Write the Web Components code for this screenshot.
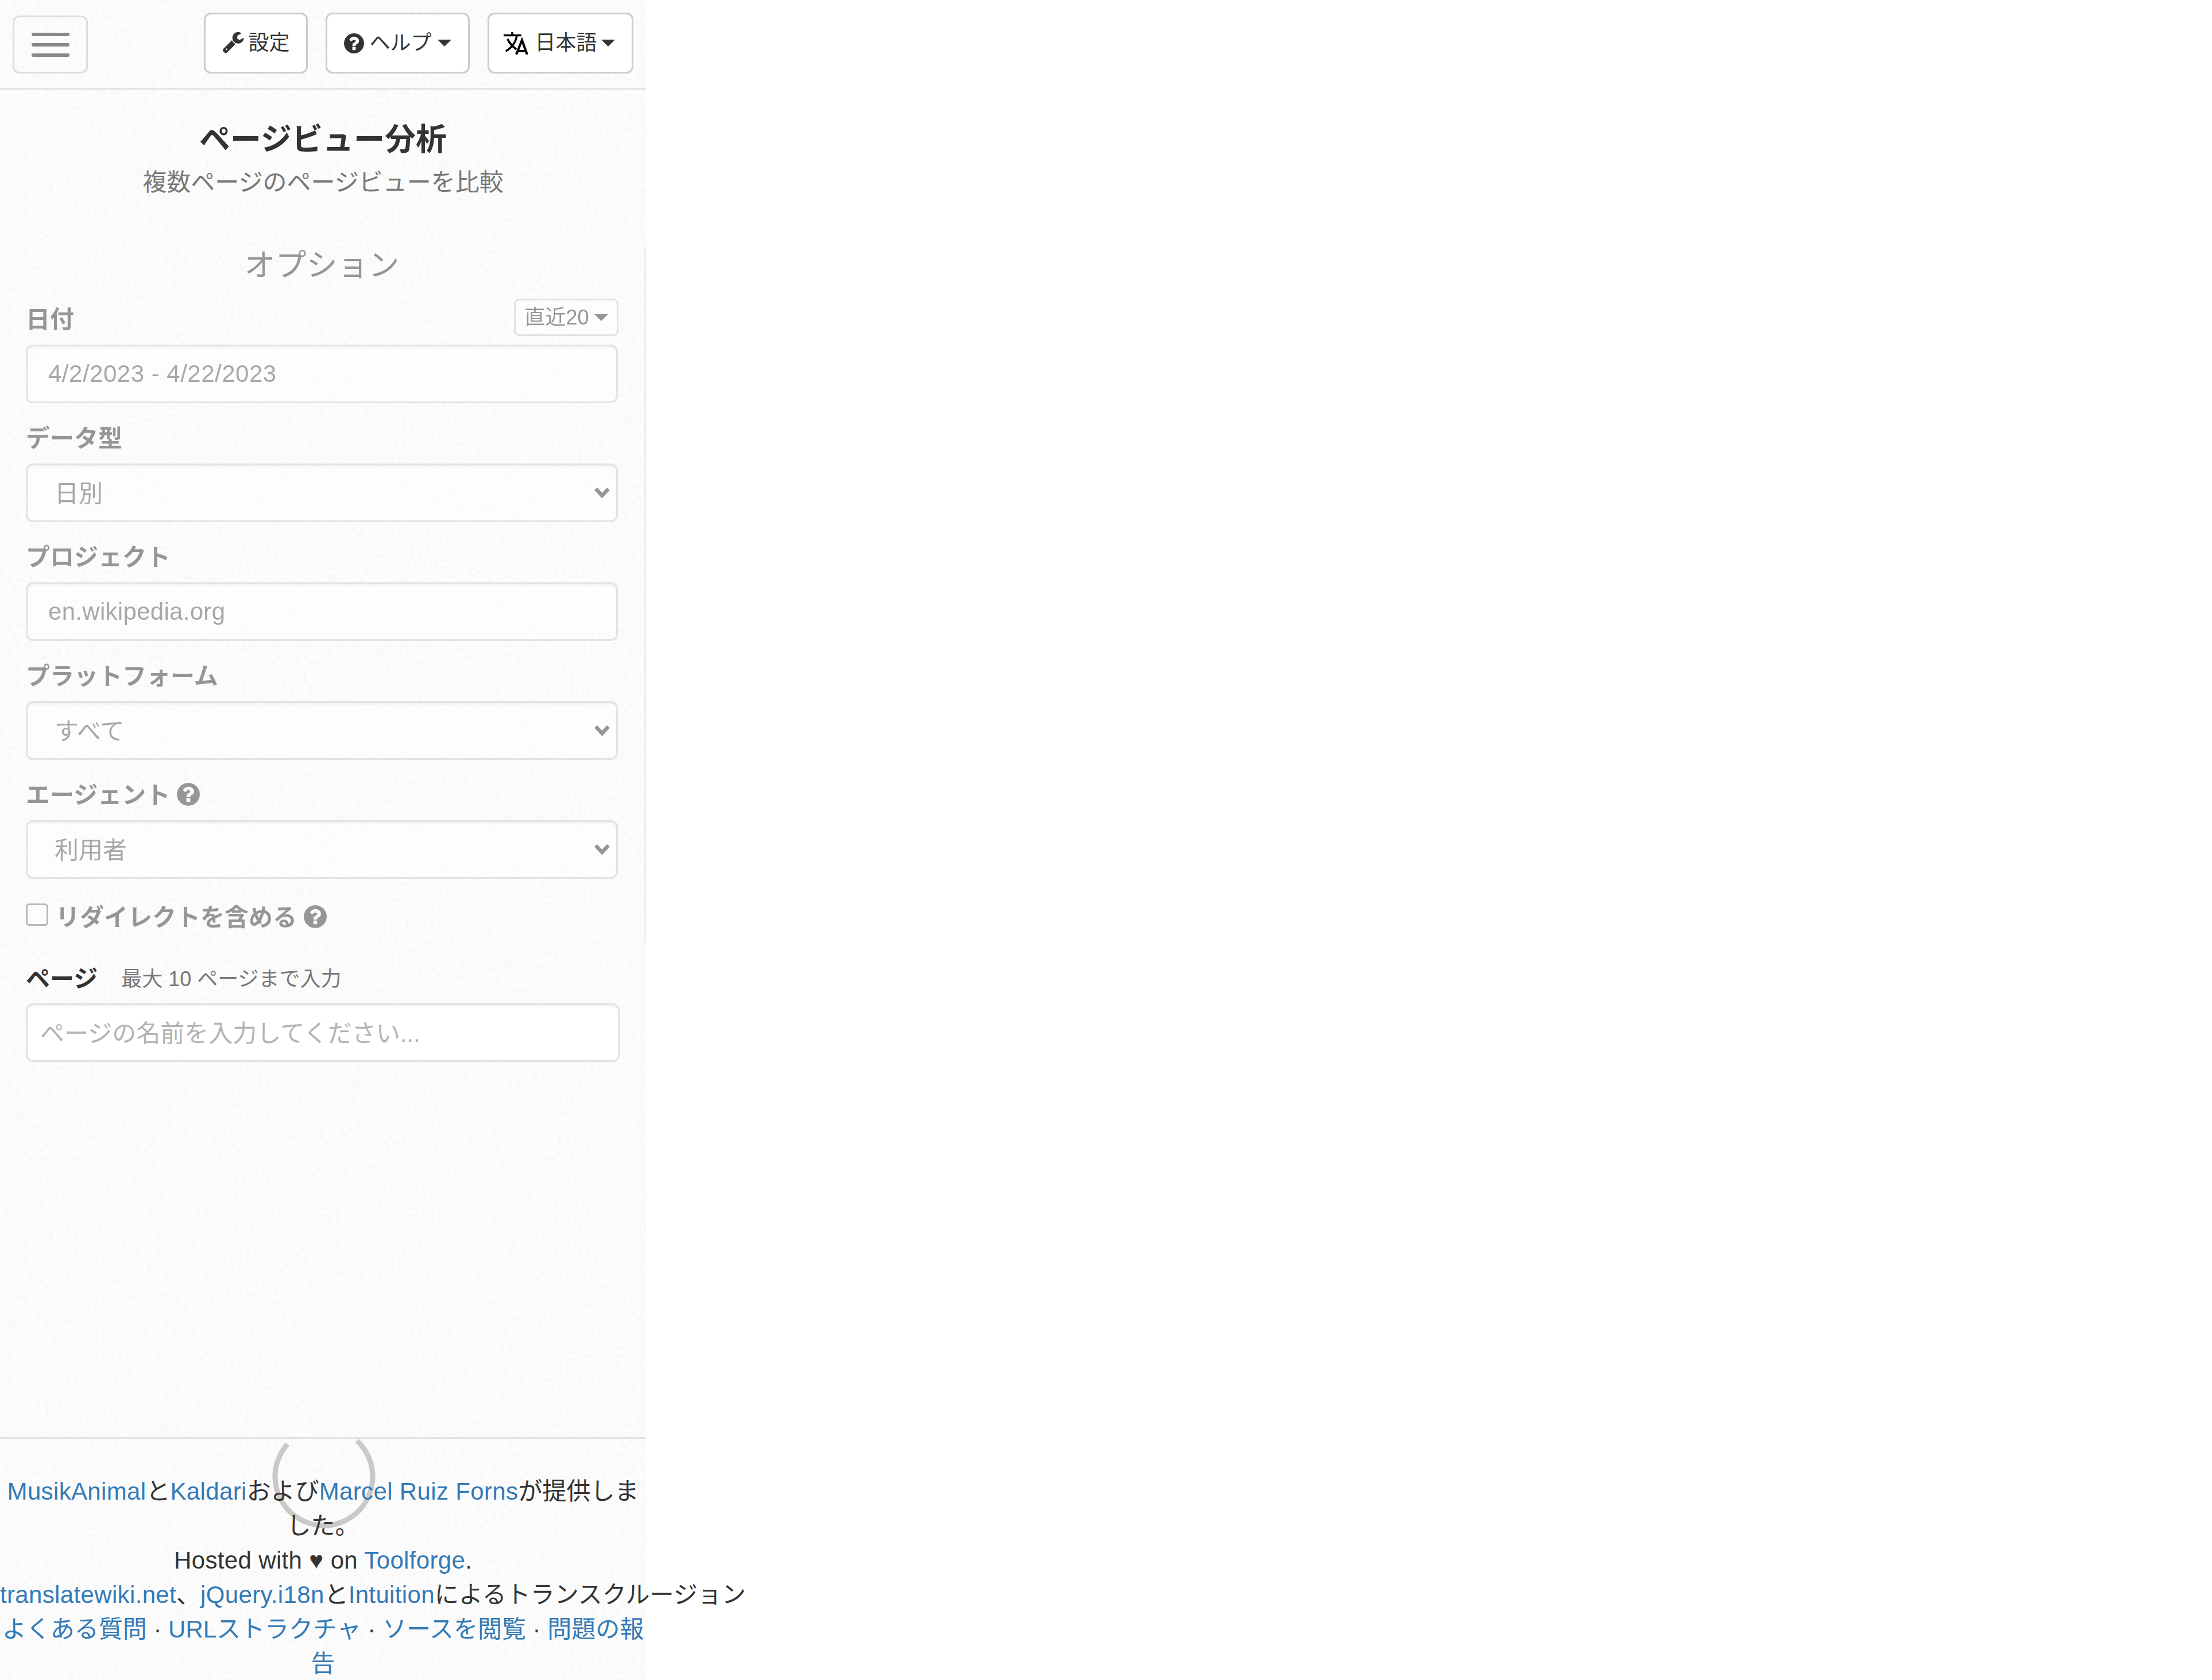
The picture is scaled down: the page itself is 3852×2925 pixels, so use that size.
<!DOCTYPE html>
<html lang="ja">
<head>
<meta charset="utf-8">
<title>ページビュー分析</title>
<style>
  html, body { margin: 0; padding: 0; background: #fff; }
  body { font: 42px/60px "Liberation Sans", "Noto Sans CJK JP", sans-serif; color: #333; }
</style>
</head>
<body>
<pv-app>
  <pv-navbar slot="nav"></pv-navbar>
  <pv-header title="ページビュー分析" subtitle="複数ページのページビューを比較"></pv-header>
  <pv-options>
    <pv-field label="日付" range="直近20"><pv-control latin=".5" value="4/2/2023 - 4/22/2023"></pv-control></pv-field>
    <pv-field label="データ型"><pv-control select value="日別"></pv-control></pv-field>
    <pv-field label="プロジェクト"><pv-control latin=".3" value="en.wikipedia.org"></pv-control></pv-field>
    <pv-field label="プラットフォーム"><pv-control select value="すべて"></pv-control></pv-field>
    <pv-field label="エージェント" help><pv-control select value="利用者"></pv-control></pv-field>
    <pv-check label="リダイレクトを含める"></pv-check>
  </pv-options>
  <pv-pages></pv-pages>
  <pv-footer slot="footer"></pv-footer>
</pv-app>

<script>
// Font Awesome 4 glyphs, 1792 grid
const ICONS = {
  wrench: 'M448 1472q0-26-19-45t-45-19-45 19-19 45 19 45 45 19 45-19 19-45zm644-420l-682 682q-37 37-90 37-52 0-91-37l-106-108q-38-36-38-90 0-53 38-91l681-681q39 98 114.500 173.500t173.500 114.500zm634-435q0 39-23 106-47 134-164.500 217.500t-258.500 83.500q-185 0-316.500-131.500t-131.500-316.500 131.500-316.500 316.500-131.500q58 0 121.500 16.500t107.500 46.500q16 11 16 28t-16 28l-293 169v224l193 107q5-3 79-48.500t135.500-81 70.500-35.500q15 0 23.500 10t8.500 25z',
  question: 'M1024 1376v-192q0-14-9-23t-23-9h-192q-14 0-23 9t-9 23v192q0 14 9 23t23 9h192q14 0 23-9t9-23zm256-672q0-88-55.500-163t-138.500-116-170-41q-243 0-371 213-15 24 8 42l132 100q7 6 19 6 16 0 25-12 53-68 86-92 34-24 86-24 48 0 85.500 26t37.500 59q0 38-20 61t-68 45q-63 28-115.500 86.500t-52.500 125.500v36q0 14 9 23t23 9h192q14 0 23-9t9-23q0-19 21.500-49.500t54.500-49.500q32-18 49-28.500t46-35 44.500-48 28-60.500 12.500-81zm384 192q0 209-103 385.500t-279.500 279.500-385.500 103-385.500-103-279.500-279.500-103-385.500 103-385.500 279.500-279.500 385.500-103 385.500 103 279.500 279.500 103 385.500z'
};
const faIcon = (name, size, box = '128 128 1536 1536') =>
  `<svg width="${size}" height="${size}" viewBox="${box}" fill="currentColor" style="display:block;flex:none"><path d="${ICONS[name]}"/></svg>`;
const caret = (color = '#333') =>
  `<svg width="24" height="12" viewBox="0 0 24 12" style="display:block;flex:none"><path d="M0 0h24L12 12z" fill="${color}"/></svg>`;

// Page shell
class PvApp extends HTMLElement {
  constructor() {
    super();
    this.attachShadow({ mode: 'open' });
  }
  connectedCallback() {
    this.shadowRoot.innerHTML = `
      <style>
        :host {
          display: flex;
          flex-direction: column;
          position: relative;
          width: 1125px;
          height: 2925px;
          background: #fdfdfd;
        }
        .noise { position: absolute; left: 0; top: 0; width: 1125px; height: 2925px; }
        .layer { position: relative; display: flex; flex-direction: column; flex: 1; }
        .spacer { flex: 1; }
      </style>
      <svg class="noise" aria-hidden="true">
        <filter id="grain" x="0" y="0" width="100%" height="100%">
          <feTurbulence type="fractalNoise" baseFrequency="0.14" numOctaves="2" seed="4"/>
          <feColorMatrix values="0 0 0 0 0  0 0 0 0 0  0 0 0 0 0  0.04 0 0 0 -0.012"/>
        </filter>
        <rect width="1125" height="2925" filter="url(#grain)"/>
      </svg>
      <div class="layer">
        <slot name="nav"></slot>
        <slot></slot>
        <div class="spacer"></div>
        <slot name="footer"></slot>
      </div>
    `;
  }
}
customElements.define('pv-app', PvApp);

// Top navbar
class PvNavbar extends HTMLElement {
  constructor() {
    super();
    this.attachShadow({ mode: 'open' });
  }
  connectedCallback() {
    this.shadowRoot.innerHTML = `
      <style>
        :host {
          display: flex;
          align-items: flex-end;
          box-sizing: border-box;
          height: 156px;
          padding: 0 22px 25px;
          border-bottom: 3px solid #e3e3e3;
          font-size: 36px;
        }
        .burger {
          box-sizing: border-box;
          width: 131px;
          height: 101px;
          border: 3px solid #ddd;
          border-radius: 12px;
          display: flex;
          flex-direction: column;
          align-items: center;
          justify-content: center;
          gap: 12px;
        }
        .burger i { width: 66px; height: 6px; border-radius: 3px; background: #888; }
        .buttons { margin-left: auto; display: flex; gap: 31px; }
        .btn {
          box-sizing: border-box;
          height: 106px;
          border: 3px solid #ccc;
          border-radius: 12px;
          background: #fff;
          color: #333;
          display: flex;
          align-items: center;
          justify-content: center;
        }
        .settings { width: 181px; gap: 6px; }
        .settings svg { margin-bottom: 4px; }
        .help { width: 251px; }
        .help .txt { margin: 0 10px 0 9px; }
        .lang { width: 254px; padding-right: 4px; }
        .lang .txt { margin: 0 7px 0 12px; }
      </style>
      <div class="burger"><i></i><i></i><i></i></div>
      <div class="buttons">
        <div class="btn settings">${faIcon('wrench', 40, '0 0 1792 1792')}<span class="txt">設定</span></div>
        <div class="btn help">${faIcon('question', 35)}<span class="txt">ヘルプ</span>${caret()}</div>
        <div class="btn lang">
          <svg width="42" height="39" viewBox="0 0 42 39" style="display:block;flex:none" fill="none" stroke="#000" stroke-width="3.6">
            <path d="M0 5.500H31M15 0V5M4 33C14 27 21 18 23 6M7 12C10 20 16 25 22 30"/>
            <path d="M22 39L32 14L41 39M25 33H38" stroke-width="4"/>
          </svg>
          <span class="txt">日本語</span>${caret()}
        </div>
      </div>
    `;
  }
}
customElements.define('pv-navbar', PvNavbar);

// Title block
class PvHeader extends HTMLElement {
  constructor() {
    super();
    this.attachShadow({ mode: 'open' });
  }
  connectedCallback() {
    this.shadowRoot.innerHTML = `
      <style>
        :host { display: block; padding: 57px 0 84px; text-align: center; }
        h1 { margin: 0 0 15px; font-size: 54px; line-height: 60px; font-weight: 700; color: #333; }
        p { margin: 0; font-size: 42px; line-height: 60px; color: #777; }
      </style>
      <h1>${this.getAttribute('title')}</h1>
      <p>${this.getAttribute('subtitle')}</p>
    `;
  }
}
customElements.define('pv-header', PvHeader);

// Greyed-out options column
class PvOptions extends HTMLElement {
  constructor() {
    super();
    this.attachShadow({ mode: 'open' });
  }
  connectedCallback() {
    this.shadowRoot.innerHTML = `
      <style>
        :host {
          display: block;
          box-sizing: border-box;
          height: 1209px;
          padding: 0 46px 0 45px;
          border-right: 3px solid #eee;
        }
        .inner { opacity: .5; }
        h2 { margin: 0 0 37px; padding-top: 4px; font-size: 54px; line-height: 52px; font-weight: 400; text-align: center; color: #333; }
      </style>
      <div class="inner">
        <h2>オプション</h2>
        <slot></slot>
      </div>
    `;
  }
}
customElements.define('pv-options', PvOptions);

// Label + control
class PvField extends HTMLElement {
  constructor() {
    super();
    this.attachShadow({ mode: 'open' });
  }
  connectedCallback() {
    const range = this.getAttribute('range');
    const help = this.hasAttribute('help');
    this.shadowRoot.innerHTML = `
      <style>
        :host { display: block; margin-bottom: 30px; }
        .row {
          display: flex;
          align-items: flex-end;
          justify-content: space-between;
          height: 60px;
          margin-bottom: 15px;
        }
        label { display: flex; align-items: center; gap: 12px; font-weight: 700; height: 60px; }
        label span { padding-top: 4px; }
        .range {
          box-sizing: border-box;
          height: 65px;
          width: 182px;
          margin-right: -1px;
          border: 3px solid #ccc;
          border-radius: 9px;
          background: #fff;
          font-size: 36px;
          display: flex;
          align-items: center;
          justify-content: center;
          gap: 9px;
        }
      </style>
      <div class="row">
        <label><span>${this.getAttribute('label')}</span>${help ? faIcon('question', 40) : ''}</label>
        ${range ? `<div class="range"><span>${range}</span>${caret()}</div>` : ''}
      </div>
      <slot></slot>
    `;
  }
}
customElements.define('pv-field', PvField);

// Text input or select look
class PvControl extends HTMLElement {
  constructor() {
    super();
    this.attachShadow({ mode: 'open' });
  }
  connectedCallback() {
    const isSelect = this.hasAttribute('select');
    const spacing = this.getAttribute('latin') || 0;
    this.shadowRoot.innerHTML = `
      <style>
        :host {
          display: flex;
          align-items: center;
          justify-content: space-between;
          box-sizing: border-box;
          height: 102px;
          padding: 0 11px 0 ${isSelect ? 47 : 36}px;
          border: 3px solid #ccc;
          border-radius: 12px;
          background: #fff;
          box-shadow: inset 0 3px 3px rgba(0,0,0,.075);
          color: #555;
        }
        span { letter-spacing: ${spacing}px; padding-top: ${isSelect ? 4 : 0}px; }
      </style>
      <span>${this.getAttribute('value')}</span>
      ${isSelect ? `<svg width="27" height="18" viewBox="0 0 27 18" fill="none" stroke="#333" stroke-width="6.500"><path d="M2.500 2L13.500 14L24.500 2"/></svg>` : ''}
    `;
  }
}
customElements.define('pv-control', PvControl);

// Checkbox row
class PvCheck extends HTMLElement {
  constructor() {
    super();
    this.attachShadow({ mode: 'open' });
  }
  connectedCallback() {
    this.shadowRoot.innerHTML = `
      <style>
        :host { display: flex; align-items: center; height: 60px; margin-top: 36px; font-weight: 700; }
        .box {
          box-sizing: border-box;
          width: 39px;
          height: 39px;
          margin: -8px 13px 0 0;
          border: 3px solid #767676;
          border-radius: 6px;
          background: #fff;
        }
        span { margin-right: 12px; padding-top: 4px; }
      </style>
      <div class="box"></div>
      <span>${this.getAttribute('label')}</span>
      ${faIcon('question', 40)}
    `;
  }
}
customElements.define('pv-check', PvCheck);

// Page name selector
class PvPages extends HTMLElement {
  constructor() {
    super();
    this.attachShadow({ mode: 'open' });
  }
  connectedCallback() {
    this.shadowRoot.innerHTML = `
      <style>
        :host { display: block; padding: 32px 46px 0 45px; }
        .row { display: flex; align-items: center; gap: 41px; height: 60px; margin-bottom: 14px; padding-top: 4px; box-sizing: border-box; }
        b { font-weight: 700; }
        small { font-size: 36px; color: #777; }
        .input {
          box-sizing: border-box;
          height: 102px;
          padding: 4px 22px 0;
          border: 3px solid #e2e2e2;
          border-radius: 12px;
          background: #fff;
          box-shadow: inset 0 3px 3px rgba(0,0,0,.04);
          display: flex;
          align-items: center;
          color: #b3b3b3;
        }
      </style>
      <div class="row"><b>ページ</b><small>最大 10 ページまで入力</small></div>
      <div class="input">ページの名前を入力してください...</div>
    `;
  }
}
customElements.define('pv-pages', PvPages);

// Credits
class PvFooter extends HTMLElement {
  constructor() {
    super();
    this.attachShadow({ mode: 'open' });
  }
  connectedCallback() {
    this.shadowRoot.innerHTML = `
      <style>
        :host {
          display: block;
          position: relative;
          padding-top: 62px;
          margin-bottom: -2px;
          border-top: 3px solid #e3e3e3;
          text-align: center;
        }
        a { color: #337ab7; text-decoration: none; }
        .l { letter-spacing: .35px; }
        .spinner { position: absolute; left: 463.500px; top: -34.500px; overflow: visible; clip-path: inset(34.500px -10px -10px -10px); }
        .text { position: relative; }
        .nowrap { white-space: nowrap; text-align: left; }
      </style>
      <svg class="spinner" width="200" height="200" viewBox="0 0 200 200" fill="none" stroke="#c9c9c9" stroke-width="9">
        <path d="M157.600 37.500A85 85 0 1 1 36.600 43.400"/>
      </svg>
      <div class="text">
        <div><a class="l">MusikAnimal</a>と<a class="l">Kaldari</a>および<a class="l">Marcel Ruiz Forns</a>が提供しました。</div>
        <div><span class="l">Hosted with ♥ on </span><a class="l">Toolforge</a>.</div>
        <div class="nowrap"><a class="l">translatewiki.net</a>、<a class="l">jQuery.i18n</a>と<a class="l">Intuition</a>によるトランスクルージョン</div>
        <div><a>よくある質問</a> · <a>URLストラクチャ</a> · <a>ソースを閲覧</a> · <a>問題の報告</a></div>
      </div>
    `;
  }
}
customElements.define('pv-footer', PvFooter);
</script>
</body>
</html>
